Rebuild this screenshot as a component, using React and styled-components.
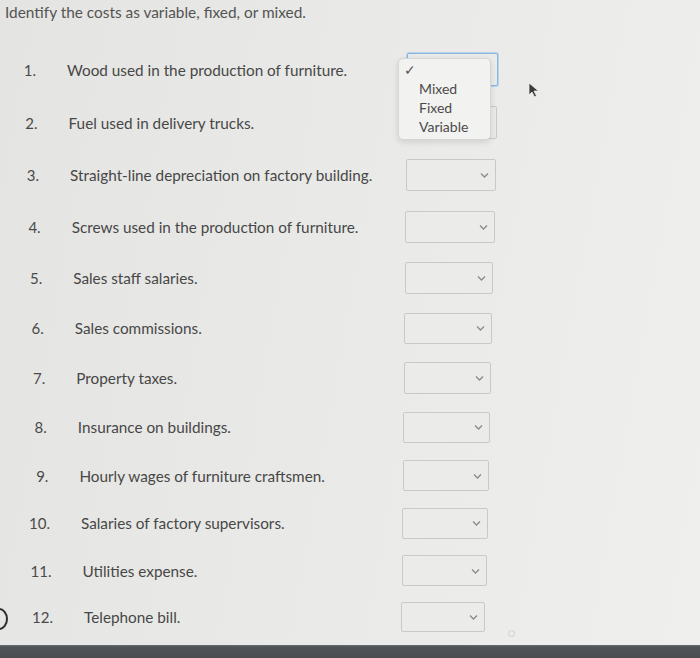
import React from 'react';
import styled, { createGlobalStyle, css } from 'styled-components';

const GlobalStyle = createGlobalStyle`
  html, body {
    margin: 0;
    padding: 0;
    background: #e8e8e6;
  }
  body {
    font-family: Lato, "Open Sans", sans-serif;
    color: #4d4d4d;
  }
`;

const Page = styled.div`
  position: relative;
  width: 700px;
  height: 658px;
  overflow: hidden;
  display: flex;
  flex-direction: column;
  background: linear-gradient(100deg, #e4e4e2 0%, #e9e9e7 45%, #efefed 100%);
`;

const Title = styled.div`
  height: 43px;
  padding: 2px 0 0 5px;
  box-sizing: border-box;
  font-size: 15.4px;
  line-height: 20px;
  color: #545454;
`;

const List = styled.div`
  display: flex;
  flex-direction: column;
  flex: 1;
`;

const Row = styled.div`
  display: flex;
  align-items: center;
  height: ${p => p.$h}px;
  padding-left: ${p => p.$shift}px;
`;

const Num = styled.div`
  width: 36px;
  text-align: right;
  font-size: 15px;
  color: #4a4a4a;
`;

const Label = styled.div`
  flex: 1;
  padding-left: 31px;
  font-size: 15.3px;
  color: #474747;
  white-space: nowrap;
`;

const SelectBox = styled.div`
  position: relative;
  width: ${p => p.$w}px;
  height: ${p => p.$sh}px;
  margin-right: ${p => p.$right}px;
  box-sizing: border-box;
  border: 1px solid #c9c9c7;
  border-radius: 2px;
  background: #ebebe9;
  ${p => p.$focus && css`
    border-color: #8db6dd;
    box-shadow: 0 0 0 1px #b7d2ec;
  `}
`;

const Chevron = styled.svg`
  position: absolute;
  right: 6px;
  top: 50%;
  margin-top: -4px;
  width: 9px;
  height: 8px;
`;

const Popup = styled.div`
  position: absolute;
  left: 398px;
  top: 58px;
  width: 93px;
  height: 82px;
  box-sizing: border-box;
  padding: 1px 0 0 0;
  background: #f2f2f0;
  border: 1px solid #d6d6d4;
  border-radius: 5px;
  box-shadow: 0 2px 6px rgba(0, 0, 0, 0.12);
`;

const Option = styled.div`
  position: relative;
  padding-left: 20px;
  font-size: 14px;
  line-height: 19px;
  color: #4b4b4b;
  height: 19px;
`;

const Check = styled.span`
  position: absolute;
  left: 5px;
  top: 0;
  font-size: 14px;
  color: #555;
`;

const BottomBar = styled.div`
  height: 13px;
  background: linear-gradient(#6a6e72 0, #4f5358 2px, #4a4e53 100%);
`;

const Cursor = styled.svg`
  position: absolute;
  left: 528px;
  top: 82px;
  width: 13px;
  height: 16px;
`;

const EdgeArc = styled.div`
  position: absolute;
  left: -10px;
  top: 608px;
  width: 14px;
  height: 18px;
  border: 2.5px solid #2f2f2f;
  border-radius: 50%;
`;

const Dot = styled.div`
  position: absolute;
  left: 508px;
  top: 630px;
  width: 5px;
  height: 5px;
  border: 1px solid #cfcfcd;
  border-radius: 50%;
`;

const items = [
  'Wood used in the production of furniture.',
  'Fuel used in delivery trucks.',
  'Straight-line depreciation on factory building.',
  'Screws used in the production of furniture.',
  'Sales staff salaries.',
  'Sales commissions.',
  'Property taxes.',
  'Insurance on buildings.',
  'Hourly wages of furniture craftsmen.',
  'Salaries of factory supervisors.',
  'Utilities expense.',
  'Telephone bill.',
];

const ChevronIcon = () => (
  <Chevron viewBox="0 0 9 8">
    <path d="M1 2.5 L4.5 6 L8 2.5" fill="none" stroke="#8a8a88" strokeWidth="1.3" />
  </Chevron>
);

export default function App() {
  return (
    <Page>
      <GlobalStyle />
      <Title>Identify the costs as variable, fixed, or mixed.</Title>
      <List>
        {items.map((text, i) => {
          const w = 91 - i * 0.6;
          const left = 407 - i * 0.55;
          return (
            <Row key={i} $h={53.4 - i * 0.66} $shift={i * 1.55}>
              <Num>{i + 1}.</Num>
              <Label>{text}</Label>
              <SelectBox
                $w={w}
                $sh={33 - i * 0.27}
                $right={700 - left - w}
                $focus={i === 0}
              >
                <ChevronIcon />
              </SelectBox>
            </Row>
          );
        })}
      </List>
      <BottomBar />
      <Popup>
        <Option><Check>✓</Check></Option>
        <Option>Mixed</Option>
        <Option>Fixed</Option>
        <Option>Variable</Option>
      </Popup>
      <Cursor viewBox="0 0 13 16">
        <path d="M1 1 L1 13 L4 10 L6.5 15 L8.5 14 L6 9 L10.5 9 Z" fill="#3a3a3a" stroke="#eee" strokeWidth="0.8" />
      </Cursor>
      <EdgeArc />
      <Dot />
    </Page>
  );
}
